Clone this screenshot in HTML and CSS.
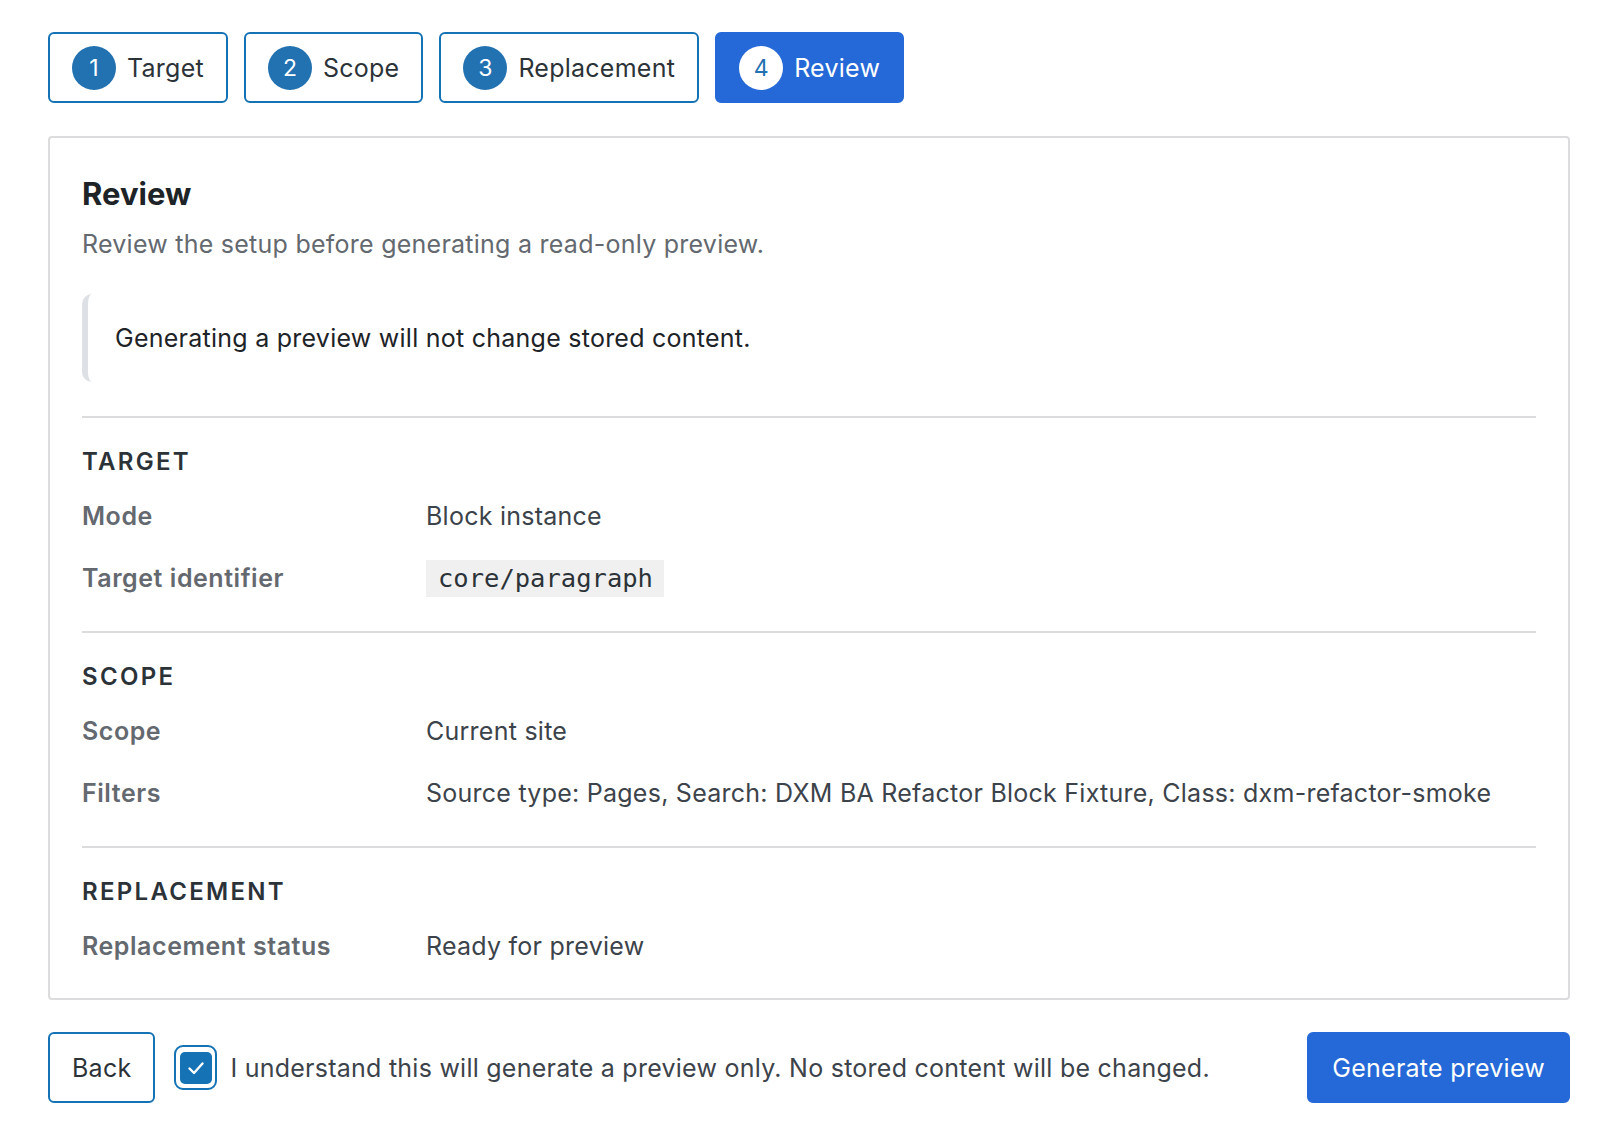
FILE: index.html
```html
<!DOCTYPE html>
<html lang="en">
<head>
<meta charset="UTF-8">
<meta name="viewport" content="width=device-width, initial-scale=1.0">
<title>Review</title>
<link rel="stylesheet" href="styles.css">
</head>
<body>

<div class="wizard">
    <nav class="steps">
        <button class="step" type="button"><span class="step-num">1</span>Target</button>
        <button class="step" type="button"><span class="step-num">2</span>Scope</button>
        <button class="step" type="button"><span class="step-num">3</span>Replacement</button>
        <button class="step active" type="button"><span class="step-num">4</span>Review</button>
    </nav>

    <div class="card">
        <h2>Review</h2>
        <p class="subtitle">Review the setup before generating a read-only preview.</p>

        <div class="notice">Generating a preview will not change stored content.</div>

        <section class="summary">
            <h3>Target</h3>
            <dl>
                <dt>Mode</dt>
                <dd>Block instance</dd>
                <dt>Target identifier</dt>
                <dd><code>core/paragraph</code></dd>
            </dl>
        </section>

        <section class="summary">
            <h3>Scope</h3>
            <dl>
                <dt>Scope</dt>
                <dd>Current site</dd>
                <dt>Filters</dt>
                <dd>Source type: Pages, Search: DXM BA Refactor Block Fixture, Class: dxm-refactor-smoke</dd>
            </dl>
        </section>

        <section class="summary">
            <h3>Replacement</h3>
            <dl>
                <dt>Replacement status</dt>
                <dd>Ready for preview</dd>
            </dl>
        </section>
    </div>

    <div class="actions">
        <button class="btn btn-secondary" type="button">Back</button>
        <label class="confirm">
            <span class="check-ring">
                <span class="check-box">
                    <svg width="22" height="22" viewBox="0 0 22 22"><path d="M4.5 11.5l4.5 4.5 8.5-9.5" fill="none" stroke="#fff" stroke-width="2.4" stroke-linecap="round" stroke-linejoin="round"/></svg>
                </span>
            </span>
            I understand this will generate a preview only. No stored content will be changed.
        </label>
        <button class="btn btn-primary" type="button">Generate preview</button>
    </div>
</div>

</body>
</html>
```

FILE: styles.css
```css
body {
    font-family: Inter, "Noto Sans", sans-serif;
    margin: 0;
    padding: 0;
    background-color: #fff;
    color: #1d2327;
}
.wizard {
    padding: 32px 48px;
}
.steps {
    display: flex;
    gap: 16px;
    margin-bottom: 33px;
}
.step {
    display: flex;
    align-items: center;
    gap: 11px;
    height: 71px;
    padding: 0 22px;
    font-family: inherit;
    font-size: 25px;
    letter-spacing: 0.25px;
    color: #2c3338;
    background-color: #fff;
    border: 2px solid #1472b5;
    border-radius: 6px;
}
.step-num {
    display: flex;
    align-items: center;
    justify-content: center;
    width: 44px;
    height: 44px;
    border-radius: 50%;
    background-color: #2271b1;
    color: #fff;
    font-size: 23px;
    letter-spacing: 0;
}
.step.active {
    background-color: #2469d7;
    border-color: #2469d7;
    color: #fff;
}
.step.active .step-num {
    background-color: #fff;
    color: #2271b1;
}
.card {
    border: 2px solid #dcdcde;
    border-radius: 4px;
    padding: 36px 32px 34px;
}
h2 {
    margin: 0;
    font-size: 31px;
    line-height: 40px;
    font-weight: 700;
    color: #1d2327;
}
.subtitle {
    margin: 12px 0 32px;
    font-size: 25px;
    letter-spacing: 0.25px;
    line-height: 36px;
    color: #646970;
}
.notice {
    padding: 26px 26px 26px 27px;
    font-size: 25px;
    letter-spacing: 0.25px;
    line-height: 36px;
    color: #1d2327;
    border-left: 6px solid #dde1e5;
    border-radius: 10px;
    margin-bottom: 34px;
}
.summary {
    border-top: 2px solid #dcdcde;
    padding: 26px 0 35px;
}
.summary:last-child {
    padding-bottom: 0;
}
h3 {
    margin: 0 0 18px;
    font-size: 24px;
    line-height: 36px;
    font-weight: 600;
    letter-spacing: 2.3px;
    text-transform: uppercase;
    color: #2c3338;
}
dl {
    display: grid;
    grid-template-columns: 344px 1fr;
    row-gap: 26px;
    margin: 0;
    font-size: 25px;
    line-height: 36px;
}
dt {
    font-weight: 600;
    letter-spacing: 0.55px;
    color: #646970;
}
dd {
    margin: 0;
    letter-spacing: 0.25px;
    color: #3c434a;
}
code {
    font-family: "DejaVu Sans Mono", "Liberation Mono", monospace;
    font-size: 25.5px;
    letter-spacing: 0;
    background-color: #f0f0f1;
    padding: 3px 11px 4px 12px;
    color: #2c3338;
}
.actions {
    display: flex;
    align-items: center;
    margin-top: 32px;
}
.btn {
    height: 71px;
    font-family: inherit;
    font-size: 25px;
    letter-spacing: 0.25px;
    border-radius: 6px;
    cursor: pointer;
}
.btn-secondary {
    padding: 0 22px;
    background-color: #fff;
    color: #2c3338;
    border: 2px solid #1472b5;
}
.btn-primary {
    margin-left: auto;
    padding: 0 23px;
    background-color: #2469d7;
    color: #fff;
    border: 2px solid #2469d7;
}
.confirm {
    display: flex;
    align-items: center;
    gap: 13px;
    margin-left: 19px;
    font-size: 25px;
    letter-spacing: 0.25px;
    color: #3c434a;
}
.check-ring {
    display: flex;
    align-items: center;
    justify-content: center;
    width: 39px;
    height: 41px;
    border: 2px solid #1472b5;
    border-radius: 9px;
}
.check-box {
    display: flex;
    align-items: center;
    justify-content: center;
    width: 32px;
    height: 32px;
    border-radius: 5px;
    background-color: #1472b5;
}
```
